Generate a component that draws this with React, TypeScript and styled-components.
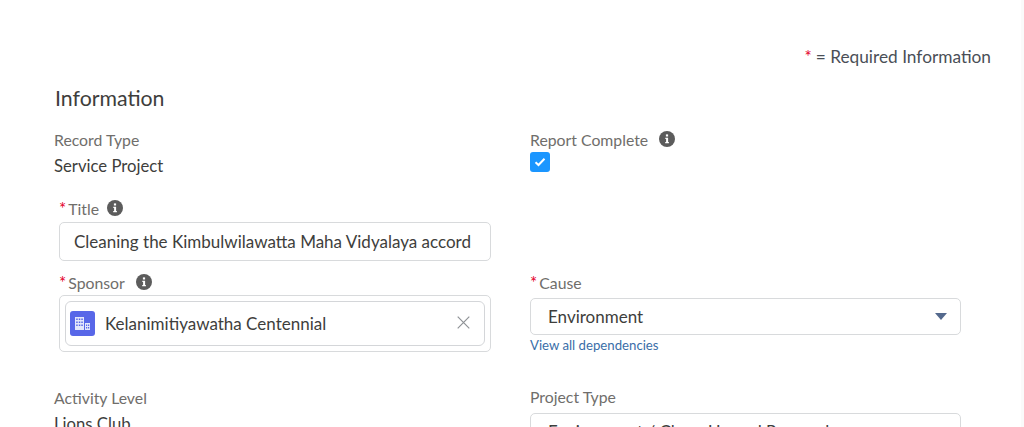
import styled, { createGlobalStyle } from "styled-components";

const GlobalStyle = createGlobalStyle`
  html, body {
    margin: 0;
    height: 100%;
    overflow: hidden;
    background: #fff;
  }
  body {
    font-family: "Lato", "Open Sans", sans-serif;
    color: #3e3e3c;
  }
`;

const Page = styled.div`
  width: 1024px;
  height: 427px;
  overflow: hidden;
  padding: 46px 30px 0 54px;
  box-sizing: border-box;
  border-right: 3px solid #fafafa;
`;

const Legend = styled.div`
  display: flex;
  justify-content: flex-end;
  align-items: baseline;
  height: 21px;
  font-size: 17.3px;
  color: #4a4f57;
`;

const Star = styled.span`
  color: #e4002b;
  font-size: 17px;
  margin-right: 4px;
`;

const SectionTitle = styled.h2`
  margin: 19px 0 0 1px;
  font-size: 21.3px;
  line-height: 24px;
  font-weight: 400;
  color: #3e3e3c;
`;

const Grid = styled.div`
  display: grid;
  grid-template-columns: 476px 431px;
  margin-top: 20px;
`;

const Column = styled.div`
  display: flex;
  flex-direction: column;
`;

const Label = styled.div<{ $inset?: boolean }>`
  display: flex;
  align-items: center;
  height: 20px;
  box-sizing: border-box;
  padding-bottom: 2px;
  font-size: 15.8px;
  color: #706e6b;
  padding-left: ${(p) => (p.$inset ? "5px" : "0")};
`;

const RedMark = styled.span`
  color: #e4002b;
  font-size: 17px;
  line-height: 1;
  margin-right: 2px;
  align-self: flex-start;
  margin-top: 1px;
`;

const InfoIcon = styled.svg<{ $gap: number }>`
  width: 16px;
  height: 16px;
  margin-left: ${(p) => p.$gap}px;
  flex: none;
`;

const ReadValue = styled.div`
  font-size: 16.7px;
  line-height: 22px;
  margin-top: 5px;
  color: #3e3e3c;
`;

const Checkbox = styled.div`
  width: 20px;
  height: 20px;
  border-radius: 3px;
  background: #1b96ff;
  display: flex;
  align-items: center;
  justify-content: center;
  margin-top: 2px;
`;

const TitleField = styled.div`
  margin-top: 22px;
  display: flex;
  flex-direction: column;
`;

const TextBox = styled.div`
  margin: 3px 0 0 5px;
  width: 432px;
  height: 39px;
  box-sizing: border-box;
  border: 1px solid #d8dadc;
  border-radius: 5px;
  padding: 0 14px;
  display: flex;
  align-items: center;
  font-size: 17px;
  white-space: nowrap;
  overflow: hidden;
`;

const LookupFrame = styled.div`
  margin: 2px 0 0 5px;
  width: 432px;
  height: 57px;
  box-sizing: border-box;
  border: 1px solid #d8dadc;
  border-radius: 5px;
  padding: 5px;
`;

const Pill = styled.div`
  height: 45px;
  box-sizing: border-box;
  border: 1px solid #d4d6d9;
  border-radius: 6px;
  display: flex;
  align-items: center;
  padding: 0 14px 0 4px;
  font-size: 17px;
`;

const EntityIcon = styled.div`
  width: 25px;
  height: 25px;
  border-radius: 3px;
  background: #5867e8;
  margin-right: 10px;
  display: flex;
  align-items: center;
  justify-content: center;
  flex: none;
`;

const ClearButton = styled.svg`
  margin-left: auto;
  width: 13px;
  height: 13px;
  margin-top: -3px;
`;

const Gap = styled.div<{ $h: number }>`
  height: ${(p) => p.$h}px;
  flex: none;
`;

const SelectBox = styled.div<{ $top?: number }>`
  margin-top: ${(p) => p.$top ?? 5}px;
  width: 431px;
  height: 37px;
  box-sizing: border-box;
  border: 1px solid #d8dadc;
  border-radius: 5px;
  padding: 0 17px;
  display: flex;
  align-items: center;
  justify-content: space-between;
  font-size: 17px;
  white-space: nowrap;
`;

const Caret = styled.span`
  width: 0;
  height: 0;
  border-left: 6px solid transparent;
  border-right: 6px solid transparent;
  border-top: 7px solid #54698d;
  margin-right: -4px;
`;

const DepLink = styled.a`
  margin-top: 1px;
  font-size: 13.2px;
  line-height: 18px;
  color: #3a6ea8;
  text-decoration: none;
`;

function Info({ gap = 11 }: { gap?: number }) {
  return (
    <InfoIcon $gap={gap} viewBox="0 0 16 16">
      <circle cx="8" cy="8" r="8" fill="#5c5c5c" />
      <rect x="6.9" y="3.4" width="2.2" height="2.1" fill="#fff" />
      <path d="M6.3 6.7h2.8v4.2h0.8v1.3H6.2v-1.3h0.9V8H6.3z" fill="#fff" />
    </InfoIcon>
  );
}

function BuildingGlyph() {
  return (
    <svg width="17" height="15" viewBox="0 0 17 15" fill="#e4e7fb">
      <path d="M1 1h9v13H1zM2.200 2.500v1.500h1.500v-1.500zM4.800 2.500v1.500h1.500v-1.500zM7.300 2.500v1.500h1.500v-1.500zM2.200 5.500v1.500h1.500v-1.500zM4.800 5.500v1.500h1.500v-1.500zM7.300 5.500v1.500h1.500v-1.500zM2.200 8.500v1.500h1.500v-1.500zM4.800 8.500v1.500h1.500v-1.500zM7.300 8.500v1.500h1.500v-1.500z" fillRule="evenodd" />
      <path d="M11 7h5v7h-5zM12 8.500v1.500h1.200v-1.500zM14 8.500v1.500h1.200v-1.500zM12 11v1.500h1.200v-1.500zM14 11v1.500h1.200v-1.500z" fillRule="evenodd" />
    </svg>
  );
}

export default function App() {
  return (
    <Page>
      <GlobalStyle />
      <Legend>
        <Star>*</Star>= Required Information
      </Legend>
      <SectionTitle>Information</SectionTitle>
      <Grid>
        <Column>
          <Label>Record Type</Label>
          <ReadValue>Service Project</ReadValue>
          <TitleField>
            <Label $inset>
              <RedMark>*</RedMark>Title
              <Info gap={8} />
            </Label>
            <TextBox>Cleaning the Kimbulwilawatta Maha Vidyalaya accord</TextBox>
          </TitleField>
          <Gap $h={12} />
          <Label $inset>
            <RedMark>*</RedMark>Sponsor
            <Info />
          </Label>
          <LookupFrame>
            <Pill>
              <EntityIcon>
                <BuildingGlyph />
              </EntityIcon>
              Kelanimitiyawatha Centennial
              <ClearButton viewBox="0 0 13 13" fill="none">
                <path d="M0.700 0.700 12.300 12.300M12.300 0.700 0.700 12.300" stroke="#8f9296" strokeWidth="1.200" />
              </ClearButton>
            </Pill>
          </LookupFrame>
          <Gap $h={36} />
          <Label>Activity Level</Label>
          <ReadValue>Lions Club</ReadValue>
        </Column>
        <Column>
          <Label>
            Report Complete
            <Info />
          </Label>
          <Checkbox>
            <svg width="12" height="10" viewBox="0 0 12 10" fill="none">
              <path d="M1.500 5.200 4.500 8 10.500 1.800" stroke="#fff" strokeWidth="2" />
            </svg>
          </Checkbox>
          <Gap $h={101} />
          <Label>
            <RedMark>*</RedMark>Cause
          </Label>
          <SelectBox>
            Environment
            <Caret />
          </SelectBox>
          <DepLink>View all dependencies</DepLink>
          <Gap $h={33} />
          <Label>Project Type</Label>
          <SelectBox $top={6}>Environment / Clean-Up and Renewal</SelectBox>
        </Column>
      </Grid>
    </Page>
  );
}
